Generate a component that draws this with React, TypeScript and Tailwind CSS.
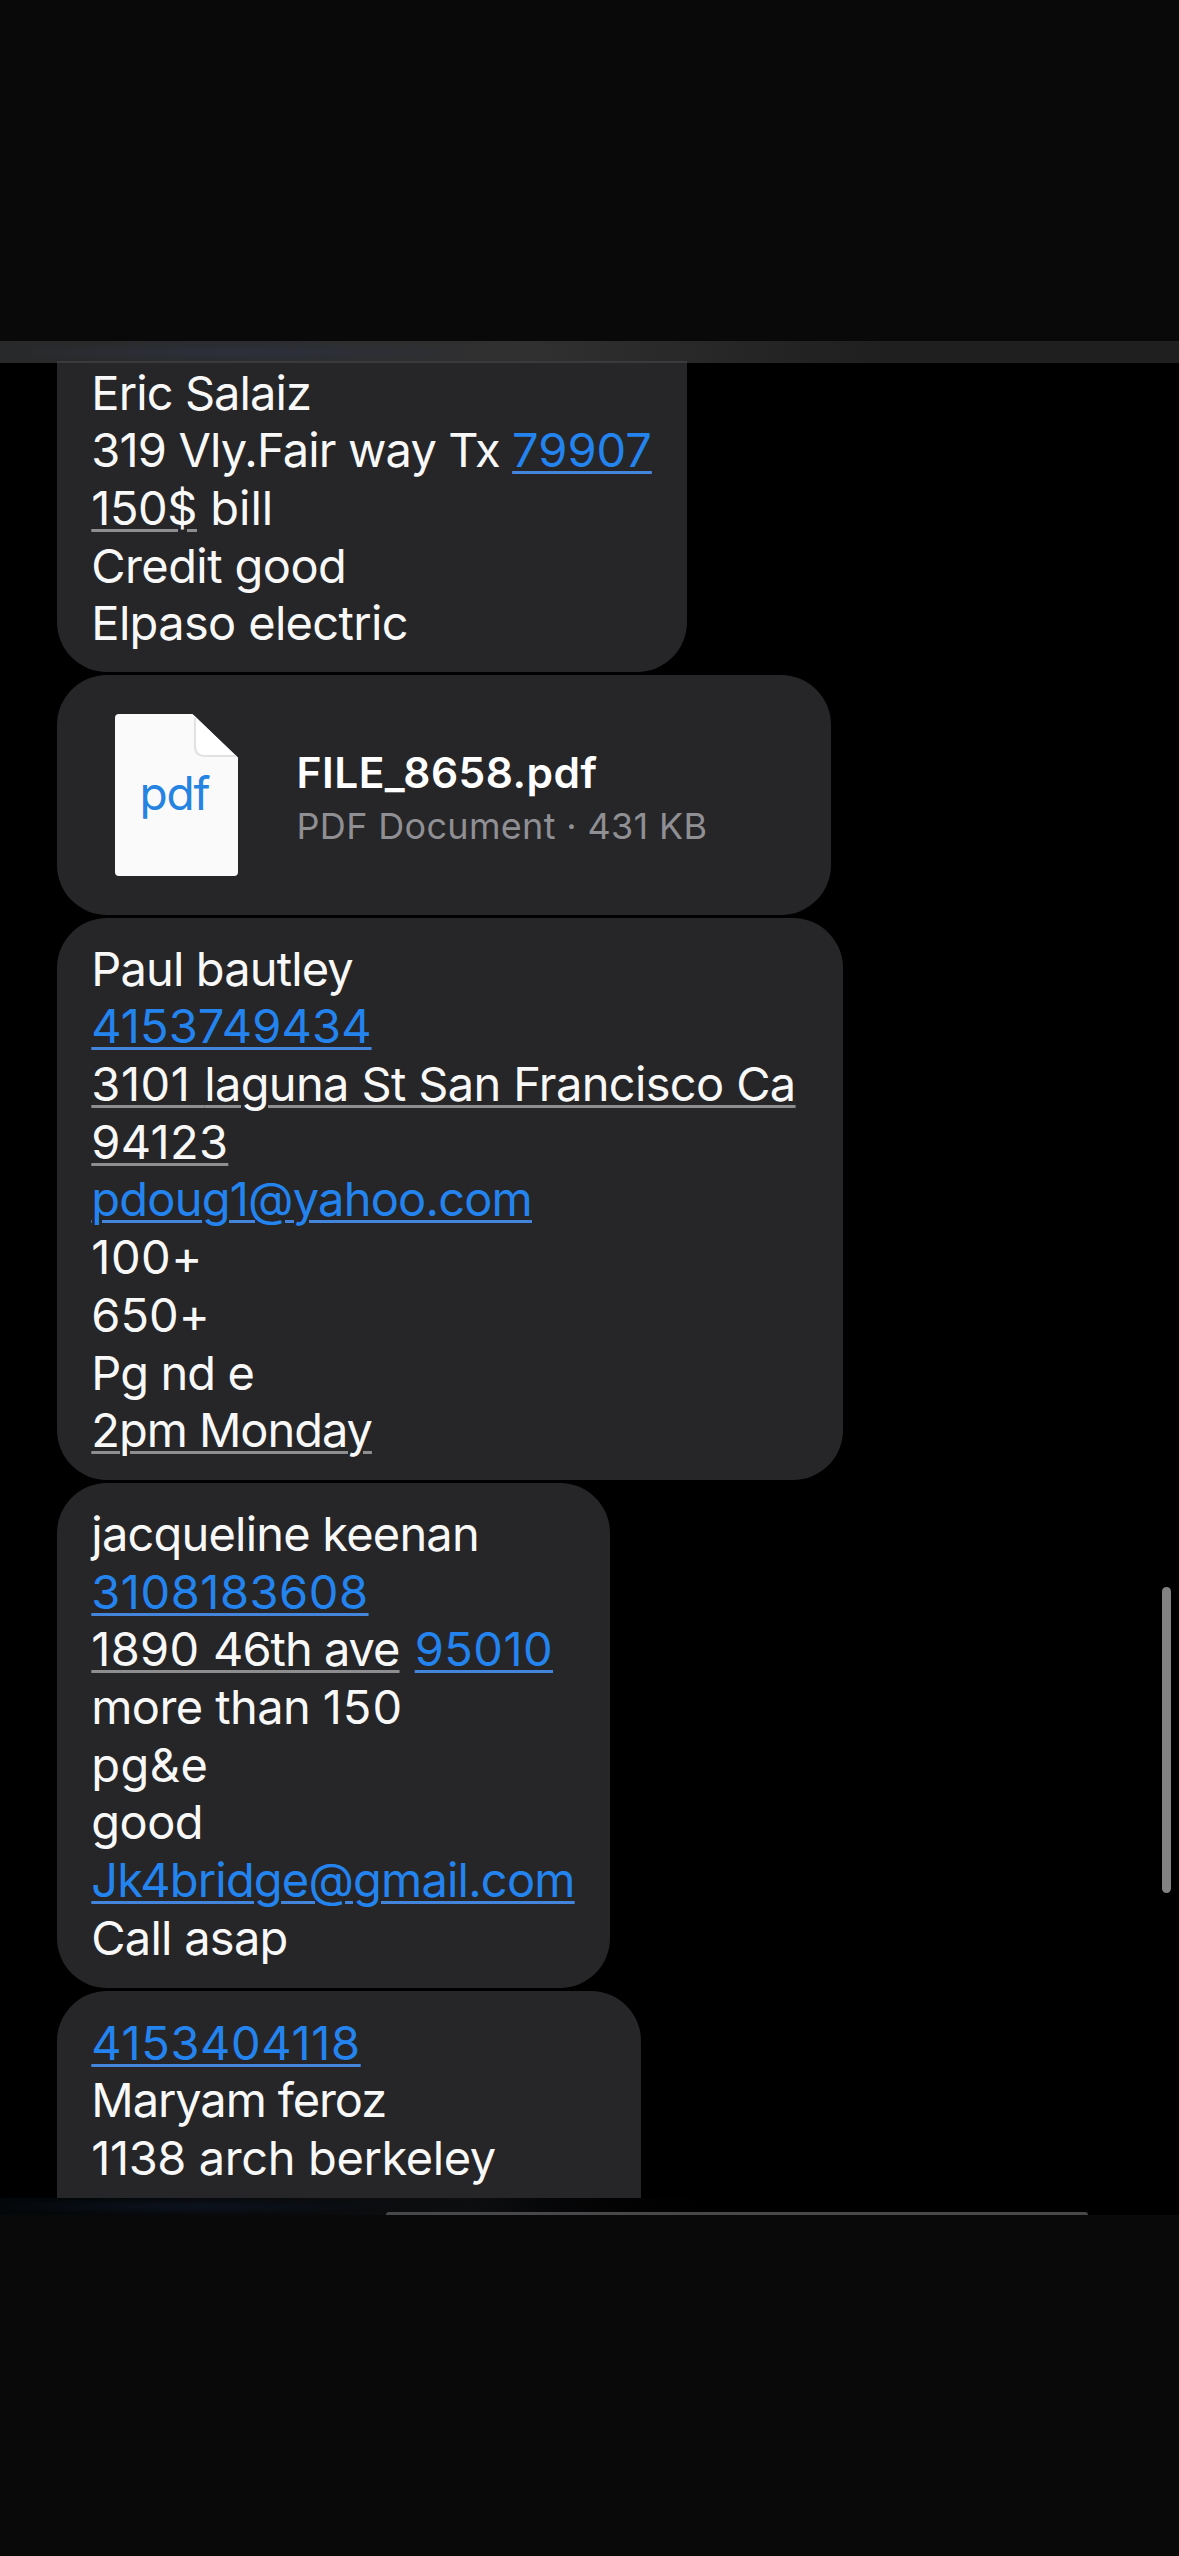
import type { ReactNode } from "react";

function Line({ children, spacing = "" }: { children: ReactNode; spacing?: string }) {
  return <p className={`h-[57.7px] whitespace-pre ${spacing}`}>{children}</p>;
}

function Link({ children, spacing = "" }: { children: ReactNode; spacing?: string }) {
  return (
    <a
      className={`text-[#2484ef] underline decoration-[#4384dd] decoration-[3px] underline-offset-[4px] ${spacing}`}
    >
      {children}
    </a>
  );
}

function Detected({ children, spacing = "" }: { children: ReactNode; spacing?: string }) {
  return (
    <span className={`underline decoration-[#8e8e90] decoration-[3px] underline-offset-[4px] ${spacing}`}>
      {children}
    </span>
  );
}

function Bubble({ children, className }: { children: ReactNode; className: string }) {
  return (
    <section
      className={`shrink-0 bg-[#262628] pl-[34.3px] text-[47px] leading-[57.7px] text-[#f8f8f9] ${className}`}
    >
      {children}
    </section>
  );
}

function PdfIcon() {
  return (
    <div className="relative h-[162px] w-[123px]">
      <svg viewBox="0 0 123 162" className="h-full w-full" fill="none">
        <path
          d="M4 0H77.500L123 43.500V158Q123 162 119 162H4Q0 162 0 158V4Q0 0 4 0Z"
          fill="#fafafa"
        />
        <path d="M78.500 1L122 43H90Q80.500 43 80.500 33V5Z" fill="#ffffff" />
        <path d="M80 4V32Q80 42 90 42H121" stroke="#e2e2e4" strokeWidth="2" />
      </svg>
      <span className="absolute left-[24.500px] top-[50px] text-[46px] leading-[58px] tracking-[-1.2px] text-[#2583e2]">
        pdf
      </span>
    </div>
  );
}

export default function App() {
  return (
    <div className="flex h-[2556px] w-[1179px] flex-col overflow-hidden bg-[#090909] font-['Inter',sans-serif]">
      <div className="h-[341px] shrink-0" />

      <main className="relative flex h-[1874px] shrink-0 flex-col overflow-hidden bg-black">
        <div className="h-[22px] shrink-0 bg-linear-to-r from-[#27292a] from-0% via-[#303031] via-45% to-[#1f1f1f] to-75%">
          <div className="h-full w-[480px] bg-radial from-[#2d2f3c] to-transparent to-70%" />
        </div>

        <div className="relative -mt-[2px] flex h-[1837px] flex-col items-start gap-[3px] overflow-hidden pl-[57px]">
          <Bubble className="h-[311px] w-[629.5px] rounded-b-[50px] border-t-2 border-[#3a3a3b] pt-[0.6px]">
            <Line spacing="tracking-[-0.91px]">Eric Salaiz</Line>
            <Line spacing="tracking-[-0.85px]">
              319 Vly.Fair way Tx <Link spacing="tracking-[0px]">79907</Link>
            </Line>
            <Line>
              <Detected spacing="tracking-[-0.45px]">150$</Detected> bill
            </Line>
            <Line spacing="tracking-[-0.59px]">Credit good</Line>
            <Line spacing="tracking-[-0.66px]">Elpaso electric</Line>
          </Bubble>

          <section className="flex h-[240px] w-[774px] shrink-0 items-start rounded-[50px] bg-[#262628] pl-[58px] pt-[39px]">
            <PdfIcon />
            <div className="ml-[58.500px] pt-[34px] whitespace-pre">
              <p className="text-[42.500px] leading-[50px] font-semibold tracking-[0.45px] text-white">
                FILE_8658.pdf
              </p>
              <p className="mt-[5px] text-[36px] leading-[46px] tracking-[0.33px] text-[#8f8f94]">
                PDF Document · 431 KB
              </p>
            </div>
          </section>

          <Bubble className="h-[562px] w-[786px] rounded-[50px] pt-[21.700px]">
            <Line spacing="tracking-[-0.86px]">Paul bautley</Line>
            <Line>
              <Link spacing="tracking-[0.1px]">4153749434</Link>
            </Line>
            <Line>
              <Detected spacing="tracking-[-0.65px]">
                <span className="tracking-[0.55px]">3101 </span>laguna St San Francisco Ca
              </Detected>
            </Line>
            <Line>
              <Detected spacing="tracking-[0.32px]">94123</Detected>
            </Line>
            <Line>
              <Link spacing="tracking-[-0.79px]">pdoug1@yahoo.com</Link>
            </Line>
            <Line spacing="tracking-[0.5px]">100+</Line>
            <Line spacing="tracking-[0.05px]">650+</Line>
            <Line spacing="tracking-[-0.91px]">Pg nd e</Line>
            <Line>
              <Detected spacing="tracking-[-1.05px]">2pm Monday</Detected>
            </Line>
          </Bubble>

          <Bubble className="h-[505px] w-[552.500px] rounded-[50px] pt-[22px]">
            <Line spacing="tracking-[-0.8px]">jacqueline keenan</Line>
            <Line>
              <Link spacing="tracking-[0.53px]">3108183608</Link>
            </Line>
            <Line>
              <Detected spacing="tracking-[-1px]">
                <span className="tracking-[0.3px]">1890 </span>46th ave
              </Detected>
              <span className="tracking-[2px]"> </span>
              <Link spacing="tracking-[0.43px]">95010</Link>
            </Line>
            <Line spacing="tracking-[-0.6px]">
              more than <span className="tracking-[1px]">150</span>
            </Line>
            <Line spacing="tracking-[0.44px]">pg&amp;e</Line>
            <Line spacing="tracking-[-0.56px]">good</Line>
            <Line>
              <Link spacing="tracking-[-0.81px]">Jk4bridge@gmail.com</Link>
            </Line>
            <Line spacing="tracking-[-0.76px]">Call asap</Line>
          </Bubble>

          <Bubble className="h-[300px] w-[583.500px] rounded-[50px] pt-[22.500px]">
            <Line>
              <Link spacing="tracking-[0.65px]">4153404118</Link>
            </Line>
            <Line spacing="tracking-[-1.1px]">Maryam feroz</Line>
            <Line spacing="tracking-[-0.4px]">1138 arch berkeley</Line>
          </Bubble>
        </div>

        <div className="flex h-[17px] shrink-0 items-end overflow-hidden bg-linear-to-r from-[#04070a] from-0% via-[#0d0e10] via-40% to-black to-70%">
          <div className="h-full w-[386px] shrink-0 bg-radial from-[#0c121e] to-transparent to-70%" />
          <div className="h-[3px] w-[702px] rounded-t-[3px] bg-[#48484a]" />
        </div>

        <div className="absolute left-[1162px] top-[1246px] h-[306px] w-[9px] rounded-full bg-[#828282]" />
      </main>
    </div>
  );
}
